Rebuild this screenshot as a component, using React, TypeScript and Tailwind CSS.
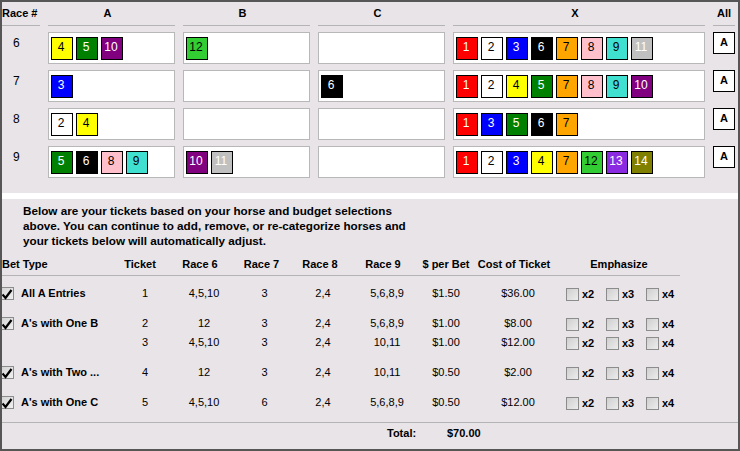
import React from "react"

const chipColors: Record<number, string> = {
  1: "bg-[#ff0000] text-white",
  2: "bg-white text-black",
  3: "bg-[#0000ff] text-white",
  4: "bg-[#ffff00] text-black",
  5: "bg-[#008000] text-white",
  6: "bg-black text-white",
  7: "bg-[#ffa500] text-black",
  8: "bg-[#ffc0cb] text-black",
  9: "bg-[#40e0d0] text-black",
  10: "bg-[#800080] text-white",
  11: "bg-[#c0c0c0] text-white",
  12: "bg-[#32cd32] text-black",
  13: "bg-[#8a2be2] text-white",
  14: "bg-[#808000] text-white",
}

const races = [
  { race: 6, a: [4, 5, 10], b: [12], c: [], x: [1, 2, 3, 6, 7, 8, 9, 11] },
  { race: 7, a: [3], b: [], c: [6], x: [1, 2, 4, 5, 7, 8, 9, 10] },
  { race: 8, a: [2, 4], b: [], c: [], x: [1, 3, 5, 6, 7] },
  { race: 9, a: [5, 6, 8, 9], b: [10, 11], c: [], x: [1, 2, 3, 4, 7, 12, 13, 14] },
]

const bets = [
  {
    label: "All A Entries",
    tickets: [["1", "4,5,10", "3", "2,4", "5,6,8,9", "$1.50", "$36.00"]],
  },
  {
    label: "A's with One B",
    tickets: [
      ["2", "12", "3", "2,4", "5,6,8,9", "$1.00", "$8.00"],
      ["3", "4,5,10", "3", "2,4", "10,11", "$1.00", "$12.00"],
    ],
  },
  {
    label: "A's with Two ...",
    tickets: [["4", "12", "3", "2,4", "10,11", "$0.50", "$2.00"]],
  },
  {
    label: "A's with One C",
    tickets: [["5", "4,5,10", "6", "2,4", "5,6,8,9", "$0.50", "$12.00"]],
  },
]

const cols = "grid grid-cols-[118px_50px_60px_63px_54px_72px_54px_90px_117px]"
// nudges so the data sits where the original does under each header
const dataPad = ["", "pl-[8px]", "pl-[6px]", "pl-[6px]", "pl-[8px]", "", ""]

const Chip = ({ n }: { n: number }) => (
  <div
    className={`h-[23px] w-[22px] border border-black pr-[2px] pt-[2px] text-center text-[12px] leading-[14px] ${chipColors[n]}`}
  >
    {n}
  </div>
)

const HorseBox = ({ horses }: { horses: number[] }) => (
  <div className="flex h-[32px] gap-[3px] border border-[#b8b8b8] bg-white pl-[2px] pt-[4px]">
    {horses.map((n) => (
      <Chip key={n} n={n} />
    ))}
  </div>
)

const EmphBox = () => (
  <div className="h-[13px] w-[13px] shrink-0 border border-[#8c8c8c] bg-gradient-to-br from-[#cfcfcf] to-[#ededed]" />
)

const CheckedBox = () => (
  <div className="relative h-[13px] w-[12px] border border-[#8c8c8c] border-l-0 bg-gradient-to-br from-[#d4d4d4] to-[#f0f0f0]">
    <svg className="absolute left-[-1px] top-[1px]" width="12" height="11" viewBox="0 0 12 11">
      <path d="M1.5 5.5 L4.5 9 L10.5 1" fill="none" stroke="black" strokeWidth="2.2" />
    </svg>
  </div>
)

const Emphasize = () => (
  <div className="flex pl-[3px] pt-[2px]">
    {["x2", "x3", "x4"].map((x) => (
      <div key={x} className="flex w-[40px] shrink-0 items-center">
        <EmphBox />
        <span className="ml-[3px] text-[11px] font-bold">{x}</span>
      </div>
    ))}
  </div>
)

export default function App() {
  return (
    <div
      className="flex h-[451px] w-[740px] flex-col overflow-hidden border-2 border-[#565656] bg-[#e8e4e8] text-black"
      style={{ fontFamily: '"Liberation Sans", Arial, sans-serif' }}
    >
      {/* horse selection grid */}
      <div className="h-[191px] shrink-0">
        <div className="grid grid-cols-[38px_127px_127px_127px_252px_22px] gap-x-2 text-[11px] font-bold">
          <div className="flex h-[24px] items-center border-b border-[#b4b4b4]">Race #</div>
          {["A", "B", "C", "X"].map((h) => (
            <div key={h} className="flex h-[24px] items-center justify-center border-b border-[#b4b4b4] pr-[8px]">
              {h}
            </div>
          ))}
          <div className="flex h-[24px] items-center justify-center border-b border-[#b4b4b4]">All</div>
        </div>
        <div className="mt-[6px] grid grid-cols-[38px_127px_127px_127px_252px_22px] gap-x-2 gap-y-[6px]">
          {races.map((r) => (
            <React.Fragment key={r.race}>
              <div className="pl-[11px] pt-[4px] text-[12px] leading-[14px]">{r.race}</div>
              <HorseBox horses={r.a} />
              <HorseBox horses={r.b} />
              <HorseBox horses={r.c} />
              <HorseBox horses={r.x} />
              <div className="h-[22px] w-[22px] border border-black bg-white pt-[2px] text-center text-[11px] font-bold leading-[14px]">
                A
              </div>
            </React.Fragment>
          ))}
        </div>
      </div>

      <div className="h-[6px] shrink-0 bg-white" />

      {/* tickets */}
      <div className="flex-1">
        <p className="pl-[21px] pt-[4px] text-[11.7px] font-bold leading-[15px]">
          Below are your tickets based on your horse and budget selections
          <br />
          above. You can continue to add, remove, or re-categorize horses and
          <br />
          your tickets below will automatically adjust.
        </p>

        <div className="w-[678px]">
          <div className={`${cols} mt-[6px] h-[22px] items-center border-b border-[#b4b4b4] text-[11px] font-bold`}>
            <div>Bet Type</div>
            <div className="pr-[10px] text-center">Ticket</div>
            <div className="text-center">Race 6</div>
            <div className="text-center">Race 7</div>
            <div className="text-center">Race 8</div>
            <div className="text-center">Race 9</div>
            <div className="text-center">$ per Bet</div>
            <div className="pr-[8px] text-center">Cost of Ticket</div>
            <div className="pr-[5px] text-center">Emphasize</div>
          </div>

          {bets.map((bet, bi) =>
            bet.tickets.map((t, ti) => (
              <div
                key={`${bi}-${ti}`}
                className={`${cols} h-[19px] items-center text-[11px] ${
                  ti > 0 ? "" : bi === 0 ? "mt-[8px]" : "mt-[11px]"
                }`}
              >
                <div className="flex items-center">
                  {ti === 0 && (
                    <>
                      <CheckedBox />
                      <span className="ml-[7px] font-bold">{bet.label}</span>
                    </>
                  )}
                </div>
                {t.map((v, i) => (
                  <div key={i} className={`text-center ${dataPad[i]}`}>
                    {v}
                  </div>
                ))}
                <Emphasize />
              </div>
            ))
          )}
        </div>

        <div className="mt-[10px] flex h-[22px] items-center border-t border-[#b4b4b4] pl-[385px] text-[11px] font-bold">
          <span className="w-[60px]">Total:</span>
          <span>$70.00</span>
        </div>
      </div>
    </div>
  )
}
